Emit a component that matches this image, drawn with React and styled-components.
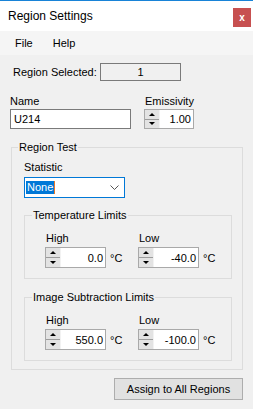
import React from 'react';
import styled, { createGlobalStyle } from 'styled-components';

const Global = createGlobalStyle`
  html, body { margin: 0; padding: 0; background: #f0f0f0; }
  body { font-family: "Liberation Sans", Arial, sans-serif; font-size: 11px; color: #000; }
  * { box-sizing: border-box; }
`;

const Window = styled.div`
  width: 253px;
  height: 409px;
  background: #f0f0f0;
  border-top: 1px solid #1883d7;
  display: flex;
  flex-direction: column;
  overflow: hidden;
`;

const TitleBar = styled.div`
  height: 30px;
  background: #fff;
  display: flex;
  align-items: center;
  justify-content: space-between;
  padding: 0 2px 0 8px;
  font-size: 12px;
  flex-shrink: 0;
`;

const CloseButton = styled.div`
  align-self: flex-start;
  margin-top: 7px;
  width: 18px;
  height: 19px;
  background: #c75050;
  color: #fff;
  font-weight: bold;
  font-size: 10px;
  display: flex;
  align-items: center;
  justify-content: center;
  padding-bottom: 1px;
`;

const MenuBar = styled.div`
  height: 24px;
  background: #f5f5f5;
  display: flex;
  align-items: center;
  padding-left: 5px;
  flex-shrink: 0;
`;

const MenuItem = styled.div`
  padding: 0 10px;
  font-size: 11px;
  line-height: 14px;
`;

const Content = styled.div`
  display: flex;
  flex-direction: column;
  padding: 0 10px 0 10px;
`;

const SelectedRow = styled.div`
  margin-top: 8px;
  padding-left: 3px;
  display: flex;
  align-items: center;
  height: 17px;
`;

const SelectedLabel = styled.div`
  width: 87px;
`;

const SelectedBox = styled.div`
  width: 81px;
  height: 18px;
  border: 1px solid #7a7a7a;
  display: flex;
  align-items: center;
  justify-content: center;
  line-height: 14px;
`;

const FieldsRow = styled.div`
  margin-top: 14px;
  display: flex;
`;

const Field = styled.div`
  display: flex;
  flex-direction: column;
  width: ${p => p.$w}px;
`;

const Label = styled.div`
  line-height: 14px;
  height: 14px;
  margin-top: ${p => p.$mt || 0}px;
  padding-left: ${p => p.$indent || 0}px;
  margin-bottom: ${p => p.$gap ?? 1}px;
`;

const TextInput = styled.div`
  width: 121px;
  height: 20px;
  border: 1px solid #7a7a7a;
  background: #fff;
  padding-left: 3px;
  display: flex;
  align-items: center;
`;

const Spin = styled.div`
  width: ${p => p.$w}px;
  height: ${p => p.$h}px;
  border: 1px solid #a9a9a9;
  background: #fff;
  display: flex;
`;

const SpinButtons = styled.div`
  width: 15px;
  display: flex;
  flex-direction: column;
  background: #e3e3e3;
  border-right: 1px solid #f2f2f2;
`;

const SpinBtn = styled.div`
  flex: 1;
  display: flex;
  align-items: center;
  justify-content: center;
  border-bottom: ${p => (p.$up ? '1px solid #9c9c9c' : 'none')};
  &::after {
    content: '';
    width: 0;
    height: 0;
    border-left: 3px solid transparent;
    border-right: 3px solid transparent;
    ${p => (p.$up ? 'border-bottom: 3px solid #000;' : 'border-top: 3px solid #000;')}
  }
`;

const SpinValue = styled.div`
  flex: 1;
  display: flex;
  align-items: center;
  justify-content: flex-end;
  padding-right: 2px;
`;

const GroupBox = styled.fieldset`
  margin: ${p => p.$mt}px 0 0 ${p => p.$ml || 0}px;
  width: ${p => p.$w}px;
  border: 1px solid #dcdcdc;
  padding: 0 0 ${p => p.$pb}px ${p => p.$pl}px;
  min-inline-size: 0;
  display: flex;
  flex-direction: column;
`;

const Legend = styled.legend`
  margin-left: ${p => p.$ml}px;
  padding: 0 1px;
  line-height: 14px;
  font-size: 11px;
`;

const Combo = styled.div`
  margin-top: 3px;
  width: 101px;
  height: 21px;
  border: 1px solid #0078d7;
  background: #fff;
  display: flex;
  align-items: center;
  padding-left: 1px;
  padding-right: 5px;
`;

const Selected = styled.span`
  background: #0078d7;
  color: #fff;
  line-height: 13px;
  padding: 0 1px;
  border-right: 1px solid #e8792a;
`;

const Chevron = styled.svg`
  margin-left: auto;
`;

const LimitsRow = styled.div`
  margin-top: 9px;
  display: flex;
`;

const LimitCol = styled.div`
  width: 97px;
  display: flex;
  flex-direction: column;
`;

const SpinRow = styled.div`
  display: flex;
  align-items: center;
`;

const Unit = styled.span`
  margin-left: 4px;
`;

const Button = styled.div`
  margin-top: 8px;
  align-self: flex-end;
  width: 129px;
  height: 22px;
  background: #e1e1e1;
  border: 1px solid #adadad;
  display: flex;
  align-items: center;
  justify-content: center;
`;

function Spinner({ value, w, h }) {
  return (
    <Spin $w={w} $h={h}>
      <SpinButtons>
        <SpinBtn $up />
        <SpinBtn />
      </SpinButtons>
      <SpinValue>{value}</SpinValue>
    </Spin>
  );
}

function Limit({ label, value, h }) {
  return (
    <LimitCol>
      <Label $indent={1} $gap={2}>{label}</Label>
      <SpinRow>
        <Spinner value={value} w={61} h={h} />
        <Unit>°C</Unit>
      </SpinRow>
    </LimitCol>
  );
}

export default function App() {
  return (
    <>
      <Global />
      <Window>
        <TitleBar>
          <span>Region Settings</span>
          <CloseButton>x</CloseButton>
        </TitleBar>
        <MenuBar>
          <MenuItem>File</MenuItem>
          <MenuItem>Help</MenuItem>
        </MenuBar>
        <Content>
          <SelectedRow>
            <SelectedLabel>Region Selected:</SelectedLabel>
            <SelectedBox>1</SelectedBox>
          </SelectedRow>
          <FieldsRow>
            <Field $w={134}>
              <Label>Name</Label>
              <TextInput>U214</TextInput>
            </Field>
            <Field $w={60}>
              <Label $indent={1}>Emissivity</Label>
              <Spinner value="1.00" w={50} h={20} />
            </Field>
          </FieldsRow>
          <GroupBox $mt={11} $ml={1} $w={232} $pl={12} $pb={8}>
            <Legend $ml={-6}>Region Test</Legend>
            <Label $mt={6} $gap={0}>Statistic</Label>
            <Combo>
              <Selected>None</Selected>
              <Chevron width="9" height="5" viewBox="0 0 9 5">
                <path d="M0.5 0.5 L4.5 4.5 L8.5 0.5" fill="none" stroke="#555" strokeWidth="1" />
              </Chevron>
            </Combo>
            <GroupBox $mt={10} $w={208} $pl={20} $pb={10}>
              <Legend $ml={-13}>Temperature Limits</Legend>
              <LimitsRow>
                <Limit label="High" value="0.0" h={21} />
                <Limit label="Low" value="-40.0" h={21} />
              </LimitsRow>
            </GroupBox>
            <GroupBox $mt={11} $w={208} $pl={20} $pb={10}>
              <Legend $ml={-13}>Image Subtraction Limits</Legend>
              <LimitsRow>
                <Limit label="High" value="550.0" h={21} />
                <Limit label="Low" value="-100.0" h={21} />
              </LimitsRow>
            </GroupBox>
          </GroupBox>
          <Button>Assign to All Regions</Button>
        </Content>
      </Window>
    </>
  );
}
